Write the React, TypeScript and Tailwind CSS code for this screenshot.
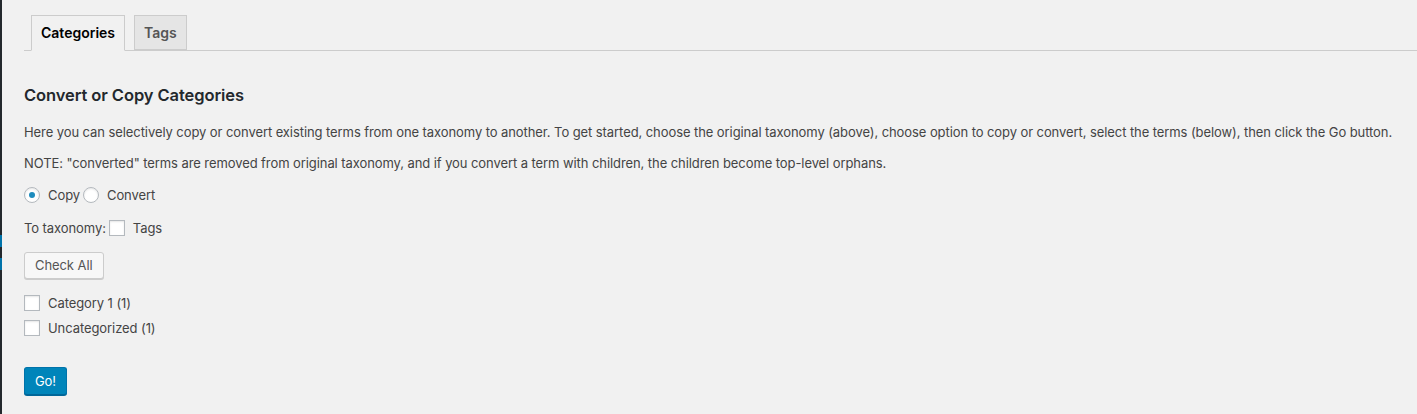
export default function App() {
  return (
    <div
      className="flex min-h-[414px] bg-[#f1f1f1] text-[13px] text-[#444]"
      style={{ fontFamily: 'Inter, "Noto Sans", sans-serif' }}
    >
      {/* admin sidebar edge */}
      <div className="flex w-[2px] flex-col bg-[#23282d]">
        <div className="h-[235px]" />
        <div className="h-[12px] bg-[#0073aa]" />
        <div className="h-[11px]" />
        <div className="h-[12px] bg-[#0073aa]" />
      </div>

      <div className="flex-1 pl-[22px] tracking-[-0.08px]">
        {/* Tabs */}
        <div className="mt-[15px] flex border-b border-[#ccc] pl-[7px] tracking-normal">
          <div className="-mb-px mr-[9px] border border-[#ccc] border-b-[#f1f1f1] bg-[#f1f1f1] px-[9px] py-[5px] text-[14px] leading-[23px] font-semibold text-black">
            Categories
          </div>
          <div className="border border-[#ccc] bg-[#e5e5e5] px-[9px] py-[5px] text-[14px] leading-[23px] font-semibold text-[#555]">
            Tags
          </div>
        </div>

        <h2 className="mt-[33px] text-[16.5px] leading-[22px] font-semibold text-[#23282d]">
          Convert or Copy Categories
        </h2>

        <p className="mt-[16px] leading-[20px]">
          Here you can selectively copy or convert existing terms from one taxonomy to another. To get started, choose the original taxonomy (above), choose option to copy or convert, select the terms (below), then click the Go button.
        </p>
        <p className="mt-[11px] leading-[20px]">
          NOTE: "converted" terms are removed from original taxonomy, and if you convert a term with children, the children become top-level orphans.
        </p>

        {/* Copy / Convert */}
        <div className="mt-[12px] flex items-center leading-[20px]">
          <span className="flex h-[16px] w-[16px] items-center justify-center rounded-full border border-[#b4b9be] bg-white shadow-[inset_0_1px_2px_rgba(0,0,0,0.1)]">
            <span className="h-[6px] w-[6px] rounded-full bg-[#1e8cbe]" />
          </span>
          <span className="ml-[8px]">Copy</span>
          <span className="ml-[3px] h-[16px] w-[16px] rounded-full border border-[#b4b9be] bg-white shadow-[inset_0_1px_2px_rgba(0,0,0,0.1)]" />
          <span className="ml-[8px]">Convert</span>
        </div>

        <div className="mt-[13px] flex items-center leading-[20px]">
          <span>To taxonomy:</span>
          <span className="ml-[3px] h-[16px] w-[16px] border border-[#b4b9be] bg-white shadow-[inset_0_1px_2px_rgba(0,0,0,0.1)]" />
          <span className="ml-[8px]">Tags</span>
        </div>

        <button className="mt-[14px] h-[27px] rounded-[3px] border border-[#ccc] bg-[#f7f7f7] px-[10px] text-[13px] leading-[25px] text-[#555] shadow-[0_1px_0_#ccc]">
          Check All
        </button>

        <div className="mt-[14px] flex flex-col gap-[5px]">
          <label className="flex items-center leading-[20px]">
            <span className="h-[16px] w-[16px] border border-[#b4b9be] bg-white shadow-[inset_0_1px_2px_rgba(0,0,0,0.1)]" />
            <span className="ml-[8px]">Category 1 (1)</span>
          </label>
          <label className="flex items-center leading-[20px]">
            <span className="h-[16px] w-[16px] border border-[#b4b9be] bg-white shadow-[inset_0_1px_2px_rgba(0,0,0,0.1)]" />
            <span className="ml-[8px]">Uncategorized (1)</span>
          </label>
        </div>

        <button className="mt-[29px] h-[28px] rounded-[3px] border border-[#0073aa] border-b-[#006799] bg-[#0085ba] px-[10px] text-[13px] leading-[26px] text-white shadow-[0_1px_0_#006799]">
          Go!
        </button>
      </div>
    </div>
  );
}
